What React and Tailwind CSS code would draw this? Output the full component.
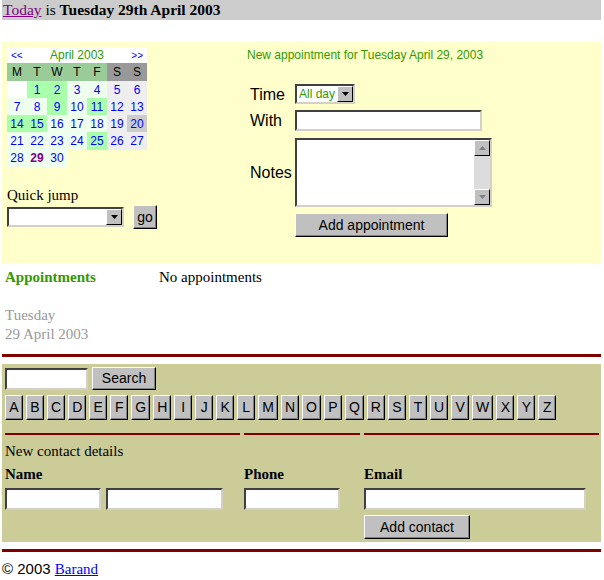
const serif = { fontFamily: '"Liberation Serif", "Times New Roman", serif' };
const sans = { fontFamily: '"Liberation Sans", Arial, sans-serif' };

const weeks = [
  [null, 1, 2, 3, 4, 5, 6],
  [7, 8, 9, 10, 11, 12, 13],
  [14, 15, 16, 17, 18, 19, 20],
  [21, 22, 23, 24, 25, 26, 27],
  [28, 29, 30],
];
const busy = [1, 2, 9, 11, 14, 15, 25];
const letters = "ABCDEFGHIJKLMNOPQRSTUVWXYZ".split("");

function cellBg(d, col) {
  if (d === null) return "bg-white";
  if (d === 20) return "bg-[#cccccc]";
  if (busy.includes(d)) return "bg-[#aaffaa]";
  if (col >= 5) return "bg-[#eeeeee]";
  return "bg-[#eeffee]";
}

function Btn({ children, className = "" }) {
  return (
    <div
      className={`flex items-center justify-center bg-[#c0c0c0] border border-t-white border-l-white border-r-black border-b-black shadow-[inset_-1px_-1px_0_#808080] text-black ${className}`}
      style={sans}
    >
      {children}
    </div>
  );
}

function Input({ className = "" }) {
  return (
    <div
      className={`bg-white border-2 border-t-[#404040] border-l-[#404040] border-r-[#d4d0c8] border-b-[#d4d0c8] ${className}`}
    />
  );
}

function Arrow() {
  return (
    <svg width="7" height="4" viewBox="0 0 7 4">
      <path d="M0 0h7L3.5 4z" fill="#000" />
    </svg>
  );
}

function Select({ className = "", children }) {
  return (
    <div
      className={`flex items-center bg-white border-2 border-t-[#404040] border-l-[#404040] border-r-[#d4d0c8] border-b-[#d4d0c8] ${className}`}
    >
      <div className="flex-1 pl-[2px] text-[12px] text-[#339900]" style={sans}>
        {children}
      </div>
      <div className="w-[16px] h-full flex items-center justify-center bg-[#c0c0c0] border border-t-white border-l-white border-r-black border-b-black">
        <Arrow />
      </div>
    </div>
  );
}

function Calendar() {
  return (
    <div className="w-[140px]" style={sans}>
      <div className="h-[16px] bg-white flex items-center justify-between px-[4px]">
        <span className="text-[10px] text-[#0000ff]">&lt;&lt;</span>
        <span className="text-[12px] text-[#339900]">April 2003</span>
        <span className="text-[10px] text-[#0000ff]">&gt;&gt;</span>
      </div>
      <div className="grid grid-cols-[repeat(7,20px)] h-[18px] text-[12px]">
        {["M", "T", "W", "T", "F", "S", "S"].map((d, i) => (
          <div
            key={i}
            className={`flex items-center justify-center ${i >= 5 ? "bg-[#999999]" : "bg-[#99cc99]"}`}
          >
            {d}
          </div>
        ))}
      </div>
      {weeks.map((w, r) => (
        <div key={r} className="grid grid-cols-[repeat(7,20px)] h-[17px] text-[12px]">
          {w.map((d, c) => (
            <div
              key={c}
              className={`flex items-center justify-center ${cellBg(d, c)} ${d === 29 ? "text-[#800080] font-bold" : "text-[#0000ff]"}`}
            >
              {d}
            </div>
          ))}
        </div>
      ))}
    </div>
  );
}

export default function App() {
  return (
    <div className="w-[604px] h-[580px] bg-white text-black" style={serif}>
      <div className="ml-[2px] w-[599px]">
        <div className="h-[20px] bg-[#cccccc] flex items-center pl-[1px] text-[15.5px]">
          <span className="text-[#800080] underline">Today</span>
          <span>&nbsp;is&nbsp;</span>
          <span className="font-bold">Tuesday 29th April 2003</span>
        </div>

        <div className="mt-[22px] h-[221px] bg-[#ffffcc] flex">
          <div className="w-[245px] pl-[5px] pt-[5px]">
            <Calendar />
            <div className="mt-[20px] text-[15px] leading-[18px]">Quick jump</div>
            <div className="flex items-center mt-[1px]">
              <Select className="w-[117px] h-[20px]" />
              <Btn className="ml-[9px] w-[24px] h-[24px] text-[14px]">go</Btn>
            </div>
          </div>
          <div className="flex-1 pt-[6px]" style={sans}>
            <div className="text-[12px] text-[#339900] leading-[14px]">
              New appointment for Tuesday April 29, 2003
            </div>
            <div className="mt-[22px] flex items-center h-[20px]">
              <div className="w-[48px] pl-[3px] text-[16px] leading-[20px] pt-[2px]">Time</div>
              <Select className="w-[60px] h-[20px]">All day</Select>
            </div>
            <div className="mt-[6px] flex items-center h-[21px]">
              <div className="w-[48px] pl-[3px] text-[16px] leading-[20px]">With</div>
              <Input className="w-[187px] h-[21px]" />
            </div>
            <div className="mt-[7px] flex items-center h-[69px]">
              <div className="w-[48px] pl-[3px] text-[16px] leading-[20px]">Notes</div>
              <div className="flex w-[197px] h-[69px] bg-white border-2 border-t-[#404040] border-l-[#404040] border-r-[#d4d0c8] border-b-[#d4d0c8]">
                <div className="flex-1" />
                <div className="w-[16px] flex flex-col bg-[#dcdcdc]">
                  <div className="h-[16px] flex items-center justify-center bg-[#c0c0c0] border border-t-white border-l-white border-r-black border-b-black">
                    <svg width="7" height="4" viewBox="0 0 7 4">
                      <path d="M0 4h7L3.5 0z" fill="#808080" />
                    </svg>
                  </div>
                  <div className="flex-1" />
                  <div className="h-[16px] flex items-center justify-center bg-[#c0c0c0] border border-t-white border-l-white border-r-black border-b-black">
                    <svg width="7" height="4" viewBox="0 0 7 4">
                      <path d="M0 0h7L3.5 4z" fill="#808080" />
                    </svg>
                  </div>
                </div>
              </div>
            </div>
            <Btn className="ml-[48px] mt-[6px] w-[153px] h-[24px] text-[14px]">Add appointment</Btn>
          </div>
        </div>

        <div className="mt-[5px] flex leading-[18px] text-[15px]">
          <div className="w-[157px] pl-[3px] font-bold text-[#339900]">Appointments</div>
          <div>No appointments</div>
        </div>
        <div className="mt-[20px] pl-[3px] text-[15px] leading-[19px] text-[#999999]">
          <div>Tuesday</div>
          <div>29 April 2003</div>
        </div>

        <div className="mt-[10px] h-[3px] bg-[#800000]" />

        <div className="mt-[7px] h-[178px] bg-[#cccc99] pl-[3px] pt-[3px]">
          <div className="flex items-center gap-[4px]">
            <Input className="w-[83px] h-[22px]" />
            <Btn className="w-[64px] h-[23px] text-[14px]">Search</Btn>
          </div>
          <div className="mt-[5px] flex gap-[3px]">
            {letters.map((l) => (
              <Btn key={l} className="min-w-[18px] px-[3px] h-[25px] text-[14px]">
                {l}
              </Btn>
            ))}
          </div>
          <div className="mt-[13px] grid grid-cols-[235px_116px_235px] gap-x-[4px]">
            <div className="h-[2px] bg-[#800000]" />
            <div className="h-[2px] bg-[#800000]" />
            <div className="h-[2px] bg-[#800000]" />
          </div>
          <div className="mt-[7px] text-[15px] leading-[18px]">New contact details</div>
          <div className="mt-[5px] grid grid-cols-[235px_116px_235px] gap-x-[4px] text-[15px] leading-[18px] font-bold">
            <div>Name</div>
            <div>Phone</div>
            <div>Email</div>
          </div>
          <div className="mt-[5px] grid grid-cols-[235px_116px_235px] gap-x-[4px]">
            <div className="flex gap-[5px]">
              <Input className="w-[96px] h-[22px]" />
              <Input className="w-[117px] h-[22px]" />
            </div>
            <Input className="w-[96px] h-[22px]" />
            <div>
              <Input className="w-[222px] h-[22px]" />
              <Btn className="mt-[5px] w-[106px] h-[24px] text-[14px]">Add contact</Btn>
            </div>
          </div>
        </div>

        <div className="mt-[7px] h-[3px] bg-[#800000]" />
        <div className="mt-[8px] text-[15px] leading-[18px]">
          <span style={sans}>© 2003 </span>
          <span className="text-[#0000ff] underline">Barand</span>
        </div>
      </div>
    </div>
  );
}
